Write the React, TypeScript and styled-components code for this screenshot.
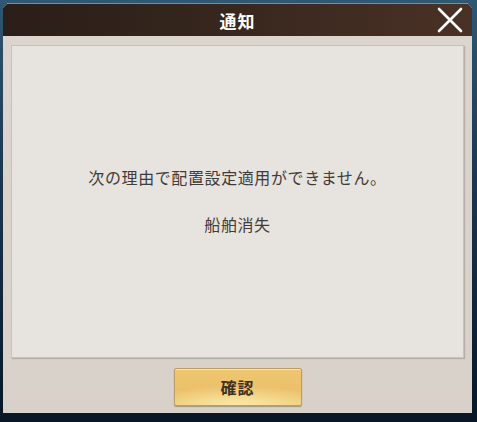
import styled, { createGlobalStyle } from "styled-components";

const GlobalStyle = createGlobalStyle`
  html, body {
    margin: 0;
    padding: 0;
    width: 477px;
    height: 422px;
    overflow: hidden;
  }
  body {
    font-family: "Noto Sans CJK JP", "Noto Sans", sans-serif;
  }
`;

const Backdrop = styled.div`
  width: 477px;
  height: 422px;
  box-sizing: border-box;
  padding: 3px 5px 9px 3px;
  display: flex;
  background: linear-gradient(180deg, #2f5873 0%, #1f3b55 35%, #102338 75%, #081626 100%);
`;

const Dialog = styled.div`
  flex: 1;
  display: flex;
  flex-direction: column;
  clip-path: polygon(5px 0, calc(100% - 5px) 0, 100% 5px, 100% 100%, 0 100%, 0 5px);
  background: #d8d1c9;
  box-shadow: 0 0 0 1px #a89f96;
`;

const Header = styled.div`
  position: relative;
  height: 33px;
  flex-shrink: 0;
  display: flex;
  align-items: center;
  justify-content: center;
  box-sizing: border-box;
  border-top: 1px solid #a8825a;
  background: linear-gradient(90deg, #2b1e18 0%, #33241c 35%, #4a3125 100%);
`;

const Title = styled.h1`
  margin: 0;
  color: #ffffff;
  font-size: 17px;
  font-weight: 700;
  letter-spacing: 1px;
  line-height: 1;
`;

const CloseButton = styled.button`
  position: absolute;
  right: 9px;
  top: 3px;
  width: 26px;
  height: 26px;
  padding: 0;
  border: none;
  background: transparent;
  cursor: pointer;
  display: flex;
`;

const Body = styled.div`
  flex: 1;
  display: flex;
  flex-direction: column;
  padding: 9px 8px 7px 8px;
  gap: 10px;
  background: linear-gradient(180deg, #dbd5ce 0%, #d8d1c9 100%);
`;

const MessagePanel = styled.div`
  flex: 1;
  display: flex;
  flex-direction: column;
  align-items: center;
  justify-content: center;
  gap: 23px;
  padding-bottom: 2px;
  background: #e7e3de;
  border: 1px solid #c9c2ba;
  box-shadow: 1px 1px 1px rgba(120, 110, 100, 0.35);
`;

const Message = styled.p`
  margin: 0;
  color: #3f3c3a;
  font-size: 16px;
  letter-spacing: 0.6px;
  line-height: 24px;
`;

const Footer = styled.div`
  display: flex;
  justify-content: center;
`;

const ConfirmButton = styled.button`
  width: 128px;
  height: 38px;
  border: 1px solid #b89c6a;
  border-radius: 2px;
  font-family: inherit;
  font-size: 16px;
  font-weight: 700;
  color: #3d3222;
  letter-spacing: 1px;
  background: radial-gradient(ellipse 70% 55% at 50% 100%, #fbe9a6 0%, rgba(250, 232, 160, 0) 100%),
    linear-gradient(180deg, #efc670 0%, #ebc06b 60%, #efcb78 100%);
  box-shadow: inset 0 1px 0 rgba(255, 240, 190, 0.7), 0 1px 1px rgba(90, 70, 40, 0.4);
  cursor: pointer;
`;

const CloseIcon = () => (
  <svg width="26" height="26" viewBox="0 0 26 26">
    <path d="M2 2 L24 24 M24 2 L2 24" stroke="#ffffff" strokeWidth="2.6" strokeLinecap="round" />
  </svg>
);

const App = () => {
  return (
    <>
      <GlobalStyle />
      <Backdrop>
        <Dialog>
          <Header>
            <Title>通知</Title>
            <CloseButton aria-label="閉じる">
              <CloseIcon />
            </CloseButton>
          </Header>
          <Body>
            <MessagePanel>
              <Message>次の理由で配置設定適用ができません。</Message>
              <Message>船舶消失</Message>
            </MessagePanel>
            <Footer>
              <ConfirmButton>確認</ConfirmButton>
            </Footer>
          </Body>
        </Dialog>
      </Backdrop>
    </>
  );
};

export default App;
